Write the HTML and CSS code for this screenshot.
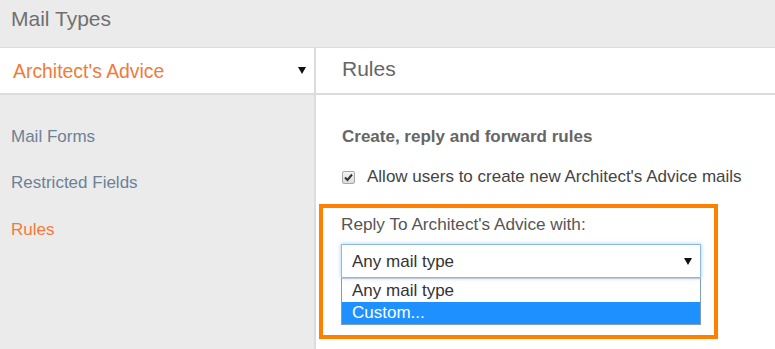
FILE: index.html
```html
<!DOCTYPE html>
<html>
<head>
<meta charset="utf-8">
<link rel="stylesheet" href="styles.css">
</head>
<body>
<div class="top">Mail Types</div>
<div class="main">
  <div class="side">
    <div class="side-select">
      <span class="side-value">Architect's Advice</span>
      <svg class="tri" width="8" height="7" viewBox="0 0 8 7"><path d="M0 0 H8 L4 7 Z" fill="#111"/></svg>
    </div>
    <ul class="nav">
      <li class="nav-item">Mail Forms</li>
      <li class="nav-item">Restricted Fields</li>
      <li class="nav-item active">Rules</li>
    </ul>
  </div>
  <div class="content">
    <div class="content-head">Rules</div>
    <div class="section-title">Create, reply and forward rules</div>
    <div class="check-row">
      <span class="checkbox"><svg width="11" height="11" viewBox="0 0 11 11"><path d="M2 5.5 L4.5 8 L9 2.5" fill="none" stroke="#333" stroke-width="2"/></svg></span>
      <span>Allow users to create new Architect's Advice mails</span>
    </div>
    <div class="highlight">
      <div class="reply-label">Reply To Architect's Advice with:</div>
      <div class="select">
        <span>Any mail type</span>
        <svg class="tri" width="8" height="7" viewBox="0 0 8 7"><path d="M0 0 H8 L4 7 Z" fill="#111"/></svg>
      </div>
      <div class="options">
        <div class="option">Any mail type</div>
        <div class="option selected">Custom...</div>
      </div>
    </div>
  </div>
</div>
</body>
</html>
```

FILE: styles.css
```css
html, body {
  margin: 0;
  padding: 0;
  height: 100%;
}
body {
  font-family: "Liberation Sans", Arial, sans-serif;
  background: #ebebeb;
  overflow: hidden;
}
.top {
  box-sizing: border-box;
  height: 48px;
  border-bottom: 1px solid #dcdcdc;
  padding-left: 11px;
  font-size: 21px;
  line-height: 38px;
  color: #707070;
}
.main {
  display: flex;
  height: 301px;
}
.side {
  width: 314px;
  border-right: 2px solid #dcdcdc;
  background: #ebebeb;
}
.side-select {
  height: 45px;
  background: #fff;
  border-bottom: 2px solid #dcdcdc;
  display: flex;
  align-items: center;
  justify-content: space-between;
  padding: 0 8px 0 13px;
}
.side-value {
  font-size: 19.4px;
  line-height: 22px;
  color: #f27a3b;
}
.tri {
  display: block;
}
.nav {
  list-style: none;
  margin: 0;
  padding: 18.5px 0 0 0;
}
.nav-item {
  height: 46.5px;
  line-height: 46px;
  padding-left: 11px;
  font-size: 17px;
  color: #6d8197;
}
.nav-item.active {
  color: #f27a3b;
}
.content {
  flex: 1;
  background: #fff;
}
.content-head {
  height: 45px;
  border-bottom: 2px solid #dcdcdc;
  padding-left: 26px;
  font-size: 21px;
  line-height: 42px;
  color: #666;
}
.section-title {
  margin-top: 32px;
  padding-left: 26px;
  font-size: 17px;
  font-weight: bold;
  color: #666;
  line-height: 20px;
}
.check-row {
  margin-top: 20px;
  padding-left: 26px;
  display: flex;
  align-items: center;
  font-size: 17px;
  color: #444;
  line-height: 20px;
}
.checkbox {
  width: 11px;
  height: 11px;
  border: 1px solid #a8a8a8;
  border-radius: 2px;
  background: linear-gradient(#f4f4f4, #dcdcdc);
  margin-right: 12px;
  display: flex;
  align-items: center;
  justify-content: center;
}
.highlight {
  margin: 17px 0 0 3px;
  width: 373px;
  height: 121px;
  border: 4px solid #ff8000;
  padding: 6px 0 0 18px;
}
.reply-label {
  font-size: 17.2px;
  color: #555;
  line-height: 20px;
}
.select {
  margin-top: 10px;
  width: 360px;
  height: 34px;
  box-sizing: border-box;
  border: 1px solid #8bbbeb;
  box-shadow: 0 0 4px rgba(90, 160, 230, 0.55);
  display: flex;
  align-items: center;
  justify-content: space-between;
  padding: 1px 8px 0 10px;
  font-size: 17px;
  color: #333;
}
.options {
  width: 360px;
  box-sizing: border-box;
  border: 1px solid #7f9db9;
  border-top-color: #c0c8d4;
  font-size: 17px;
  color: #333;
}
.option {
  height: 23px;
  line-height: 23px;
  padding-left: 10px;
}
.option.selected {
  height: 22px;
  line-height: 21px;
  background: #1e90ff;
  color: #fff;
}
```
